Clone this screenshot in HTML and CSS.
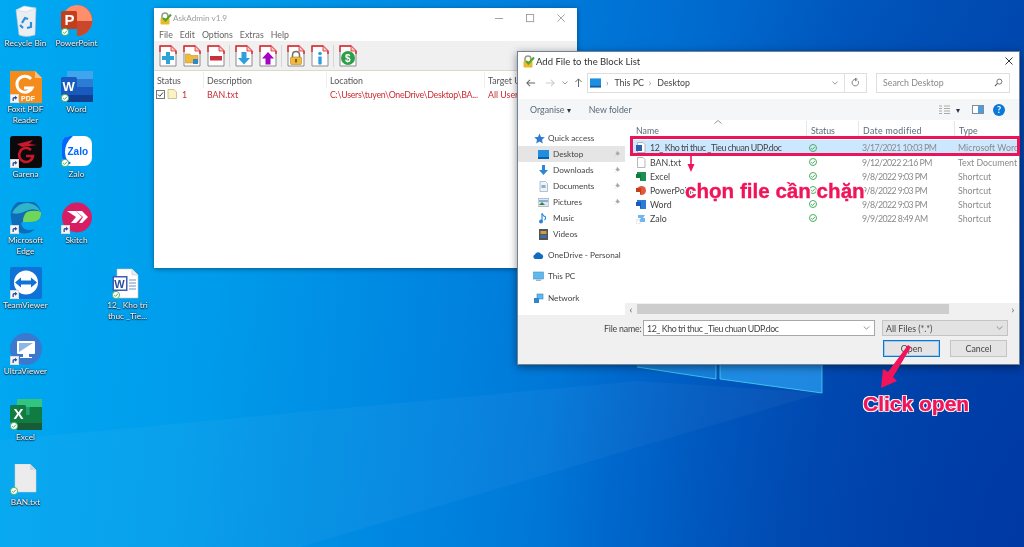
FILE: index.html
```html
<!DOCTYPE html>
<html lang="vi">
<head>
<meta charset="utf-8">
<title>AskAdmin</title>
<link rel="stylesheet" href="styles.css">
</head>
<body>
<svg class="defs" width="0" height="0" aria-hidden="true">
  <defs>
    <symbol id="short" viewBox="0 0 9 9"><rect width="9" height="9" fill="#fff"/><rect x=".5" y=".5" width="8" height="8" fill="#f4f4f4" stroke="#bbb" stroke-width=".5"/><path d="M2.5 7V4.5Q2.5 3 4 3H5V1.8L7.4 3.8 5 5.8V4.5H4Q3.8 4.5 3.8 5V7Z" fill="#2b4f9c"/></symbol>
    <symbol id="sync" viewBox="0 0 8 8"><circle cx="4" cy="4" r="3.6" fill="#fff" stroke="#4aae5c" stroke-width=".9"/><path d="M2.2 4.1 3.5 5.4 5.9 2.8" fill="none" stroke="#4aae5c" stroke-width="1"/></symbol>
    <symbol id="page" viewBox="0 0 18 22"><path d="M1 1H12L17 6V21H1Z" fill="#fff" stroke="#8b8b8b"/><path d="M1 7V1H12L17 6V9" fill="none" stroke="#e0242c" stroke-width="1.4"/><path d="M12 1V6H17" fill="#f7c8c8" stroke="#e0242c" stroke-width=".8"/></symbol>
    <symbol id="lockcheck" viewBox="0 0 13 13"><path d="M3 6V4Q3 1 6 1T9 4V6" fill="none" stroke="#9a9a8a" stroke-width="1.6"/><rect x="1.5" y="6" width="9" height="6.5" rx="1" fill="#e9b92d"/><path d="M4 6 6.5 8.5 12 2.5" fill="none" stroke="#4fa52a" stroke-width="2"/></symbol>
    <symbol id="ok" viewBox="0 0 8 8"><circle cx="4" cy="4" r="3.5" fill="none" stroke="#4aae5c" stroke-width="1"/><path d="M2.2 4.100 3.500 5.400 5.900 2.900" fill="none" stroke="#4aae5c"/></symbol>
    <symbol id="pin" viewBox="0 0 8 8"><path d="M4 .8 7.2 4 5.6 4.4 4.2 5.8 3.8 4.4 1 7 3.6 4.2 2.2 3.8 3.6 2.4Z" fill="#a8a8a8"/></symbol>
    <symbol id="sdoc" viewBox="0 0 10 11"><path d="M1.5 .5H7L9 2.5V10.500H1.500Z" fill="#fff" stroke="#9a9a9a" stroke-width=".7"/></symbol>
  </defs>
</svg>
<main class="screen">
  <svg class="wall" viewBox="0 0 1024 547" aria-hidden="true">
    <polygon points="0,440 637,381 822,393 300,547 0,547" fill="#fff" opacity=".035"/>
    <polygon points="500,300 637,300 637,367 716,379 716,300" fill="#2a9cf0" opacity=".55"/>
    <polygon points="720,300 822,300 822,393 720,379" fill="#2a9cf0" opacity=".75"/>
    <path d="M637 367 716 379V360M720 360V379L822 393V360" fill="none" stroke="#47d7ee" stroke-width="1" opacity=".8"/>
  </svg>

  <section class="desktop">
    <figure class="dicon">
      <svg class="dsvg" viewBox="0 0 32 32"><path d="M6 5 26 3 25 30Q16 33 9 30Z" fill="#e9eef3" stroke="#b8c2cc" stroke-width=".6"/><path d="M6 5 14 1 26 3 16 7Z" fill="#f7f9fb" stroke="#c4ccd4" stroke-width=".5"/><path d="M12 18 15 13 18 14M21 17 21 22 17 23M13 23 10 20" fill="none" stroke="#2d8fd8" stroke-width="2.200"/></svg>
      <figcaption>Recycle Bin</figcaption>
    </figure>
    <figure class="dicon">
      <svg class="dsvg" viewBox="0 0 32 32"><path d="M0 0H25L32 7V32H0Z" fill="#f48c1d"/><path d="M25 0 32 7H25Z" fill="#fbc078"/><path d="M21 8A8 8 0 1 0 22 17H14" fill="none" stroke="#fff" stroke-width="3"/><text x="11" y="30" class="svgb t7" fill="#fff">PDF</text><use href="#short" x="0" y="23" width="9" height="9"/></svg>
      <figcaption>Foxit PDF Reader</figcaption>
    </figure>
    <figure class="dicon">
      <svg class="dsvg" viewBox="0 0 32 32"><rect width="32" height="32" rx="3" fill="#0a0a0c"/><path d="M7 8 23 4 19 8 27 9 12 11" fill="#c9182a"/><path d="M21 14A7 7 0 1 0 23 20H16" fill="none" stroke="#c9182a" stroke-width="2.600"/><use href="#short" x="0" y="23" width="9" height="9"/></svg>
      <figcaption>Garena</figcaption>
    </figure>
    <figure class="dicon">
      <svg class="dsvg" viewBox="0 0 32 32"><path d="M1 16A15 15 0 0 1 31 10Q32 20 20 20H13Q10 20 12 24 15 30 25 27 19 33 11 31 1 27 1 16Z" fill="#0f6cb8"/><path d="M31 10Q32 20 20 20H13Q13 10 20 9 27 8 31 10Z" fill="#6fd65a"/><path d="M2 11Q8 0 18 1 27 2 31 10 24 5 16 9 8 13 2 11Z" fill="#2fb5c9"/><use href="#short" x="0" y="23" width="9" height="9"/></svg>
      <figcaption>Microsoft Edge</figcaption>
    </figure>
    <figure class="dicon">
      <svg class="dsvg" viewBox="0 0 32 32"><rect width="32" height="32" rx="2" fill="#0e72d6"/><circle cx="16" cy="15.500" r="12" fill="#fff"/><path d="M5 15.500 11 10.500V13.500H21V10.500L27 15.500 21 20.500V17.500H11V20.500Z" fill="#0e72d6"/><use href="#short" x="0" y="23" width="9" height="9"/></svg>
      <figcaption>TeamViewer</figcaption>
    </figure>
    <figure class="dicon">
      <svg class="dsvg" viewBox="0 0 32 32"><circle cx="16" cy="16" r="16" fill="#3b78d0"/><rect x="7" y="8" width="18" height="13" rx="1" fill="#fff"/><path d="M9 10H23L9 19Z" fill="#8fb4e6"/><path d="M13 21H19V24H22V25H10V24H13Z" fill="#fff"/><use href="#short" x="0" y="23" width="9" height="9"/></svg>
      <figcaption>UltraViewer</figcaption>
    </figure>
    <figure class="dicon">
      <svg class="dsvg" viewBox="0 0 32 32"><rect x="7" y="0" width="25" height="8" fill="#33c481"/><rect x="7" y="8" width="12.500" height="8" fill="#21a366"/><rect x="19.500" y="8" width="12.500" height="8" fill="#107c41"/><rect x="7" y="16" width="25" height="8" fill="#107c41"/><rect x="7" y="24" width="25" height="7" fill="#185c37"/><rect x="0" y="6" width="16" height="18" rx="1.500" fill="#107c41"/><text x="3.500" y="20" class="svgb t14" fill="#fff">X</text><use href="#sync" x="0" y="23" width="8" height="8"/></svg>
      <figcaption>Excel</figcaption>
    </figure>
    <figure class="dicon">
      <svg class="dsvg" viewBox="0 0 32 32"><path d="M5 0H20L26 6V28H5Z" fill="#ececec" stroke="#d0d0d0" stroke-width=".5"/><path d="M20 0 26 6H20Z" fill="#d6d6d6"/><use href="#sync" x="0" y="23" width="8" height="8"/></svg>
      <figcaption>BAN.txt</figcaption>
    </figure>
    <figure class="dicon">
      <svg class="dsvg" viewBox="0 0 32 32"><path d="M16 0A15.500 15.500 0 1 1 16 31Z" fill="#e0593a"/><path d="M16 0A15.500 15.500 0 0 0 1 16H31A15.500 15.500 0 0 0 16 0Z" fill="#ff8f6b"/><path d="M16 16H31A15.500 15.500 0 0 1 16 31Z" fill="#c9472a"/><rect x="0" y="6" width="16" height="18" rx="1.500" fill="#c43e1c"/><text x="3.500" y="20" class="svgb t14" fill="#fff">P</text><use href="#sync" x="0" y="23" width="8" height="8"/></svg>
      <figcaption>PowerPoint</figcaption>
    </figure>
    <figure class="dicon">
      <svg class="dsvg" viewBox="0 0 32 32"><rect x="6" y="0" width="26" height="8" fill="#41a5ee"/><rect x="6" y="8" width="26" height="8" fill="#2b7cd3"/><rect x="6" y="16" width="26" height="8" fill="#185abd"/><rect x="6" y="24" width="26" height="7" fill="#103f91"/><rect x="0" y="6" width="16" height="18" rx="1.500" fill="#185abd"/><text x="1.500" y="20" class="svgb t13" fill="#fff">W</text><use href="#sync" x="0" y="23" width="8" height="8"/></svg>
      <figcaption>Word</figcaption>
    </figure>
    <figure class="dicon">
      <svg class="dsvg" viewBox="0 0 32 32"><rect x="1" y="0" width="30" height="30" rx="8" fill="#fff"/><path d="M1 8Q1 0 9 0H12Q4 7 4 16 4 24 10 27 6 30 3 27 1 25 1 20Z" fill="#0068ff"/><text x="6.500" y="19" class="svgb t10" fill="#0068ff">Zalo</text><use href="#sync" x="0" y="23" width="8" height="8"/></svg>
      <figcaption>Zalo</figcaption>
    </figure>
    <figure class="dicon">
      <svg class="dsvg" viewBox="0 0 32 32"><circle cx="16" cy="15.500" r="15" fill="#d81e63"/><path d="M6 9H15L21 15 15 21H10L15 15Z" fill="#fff"/><path d="M15 9H21L27 15 21 21H18L22 15Z" fill="#fff"/><use href="#short" x="0" y="23" width="9" height="9"/></svg>
      <figcaption>Skitch</figcaption>
    </figure>
    <figure class="dicon doc-file">
      <svg class="dsvg" viewBox="0 0 32 32"><path d="M5 2H20L26 8V31H5Z" fill="#fff" stroke="#c4c4c4" stroke-width=".6"/><path d="M20 2V8H26" fill="#eee" stroke="#c4c4c4" stroke-width=".6"/><path d="M17 13H24M17 16H24M17 19H24M17 22H24" stroke="#9db6d8" stroke-width="1.300"/><rect x="0.500" y="9" width="15" height="15" fill="#3a5fb4"/><rect x="2" y="10.500" width="12" height="12" fill="#fff"/><text x="2.300" y="20.500" class="svgb t11" fill="#2b4f9c">W</text><use href="#sync" x="0" y="24" width="8" height="8"/></svg>
      <figcaption>12_ Kho tri thuc _Tie...</figcaption>
    </figure>
  </section>

  <section class="askadmin">
    <header class="aa-title">
      <svg class="aa-logo"><use href="#lockcheck" width="13" height="13"/></svg>
      <span>AskAdmin v1.9</span>
      <div class="caption">
        <svg class="cap" viewBox="0 0 10 10"><path d="M0 5H9" stroke="#999"/></svg>
        <svg class="cap" viewBox="0 0 10 10"><rect x=".5" y=".5" width="8" height="8" fill="none" stroke="#999"/></svg>
        <svg class="cap" viewBox="0 0 10 10"><path d="M.5.5 8.500 8.500M8.500.5.500 8.500" stroke="#999"/></svg>
      </div>
    </header>
    <nav class="aa-menu"><span>File</span><span>Edit</span><span>Options</span><span>Extras</span><span>Help</span></nav>
    <div class="aa-tools">
      <div class="tgroup">
        <svg class="tool" viewBox="0 0 18 22"><use href="#page"/><path d="M7 7H11V11H15V15H11V19H7V15H3V11H7Z" fill="#2da3d8"/></svg>
        <svg class="tool" viewBox="0 0 18 22"><use href="#page"/><path d="M2.500 9H7L8 10.500H15V18H2.500Z" fill="#eeb93c" stroke="#b98a1e" stroke-width=".5"/><rect x="10" y="14" width="5" height="5" fill="#2f86c8"/></svg>
        <svg class="tool" viewBox="0 0 18 22"><use href="#page"/><rect x="3" y="11" width="12" height="4.500" fill="#c9303c"/></svg>
      </div>
      <i class="tsep"></i>
      <div class="tgroup">
        <svg class="tool" viewBox="0 0 18 22"><use href="#page"/><path d="M6.500 7H11.500V13H15L9 19.500 3 13H6.500Z" fill="#2f9fdc"/></svg>
        <svg class="tool" viewBox="0 0 18 22"><use href="#page"/><path d="M6.500 19.500H11.500V13.500H15L9 7 3 13.500H6.500Z" fill="#a205c4"/></svg>
      </div>
      <i class="tsep"></i>
      <div class="tgroup">
        <svg class="tool" viewBox="0 0 18 22"><use href="#page"/><path d="M5.500 13V10Q5.500 6.500 9 6.500T12.500 10V13" fill="none" stroke="#6e6e6e" stroke-width="1.500"/><rect x="3.500" y="12" width="11" height="7.500" rx="1" fill="#eeb93c" stroke="#a67c18" stroke-width=".5"/><rect x="8.200" y="14" width="1.600" height="3.500" fill="#6b4d0c"/></svg>
        <svg class="tool" viewBox="0 0 18 22"><use href="#page"/><circle cx="9" cy="8.500" r="1.800" fill="#2f9fdc"/><rect x="7.300" y="11.500" width="3.400" height="8" rx="1" fill="#2f9fdc"/></svg>
      </div>
      <i class="tsep"></i>
      <div class="tgroup">
        <svg class="tool" viewBox="0 0 18 22"><use href="#page"/><circle cx="9" cy="13" r="7" fill="#2f9e4a"/><text x="6" y="16.500" class="svgb t10" fill="#fff">$</text></svg>
      </div>
    </div>
    <div class="aa-head">
      <span class="c-status">Status</span><span class="c-desc">Description</span><span class="c-loc">Location</span><span class="c-target">Target User</span>
    </div>
    <div class="aa-row">
      <span class="c-status status-cell">
        <svg class="chk" viewBox="0 0 9 9"><rect x=".5" y=".5" width="8" height="8" fill="#fff" stroke="#777"/><path d="M2 4.500 3.800 6.300 7 2.500" fill="none" stroke="#444"/></svg>
        <svg class="note" viewBox="0 0 10 10"><path d="M1 .5H7L9.500 3V9.500H1Z" fill="#fbf3c4" stroke="#b8ad78" stroke-width=".7"/></svg>
        <b>1</b>
      </span>
      <span class="c-desc">BAN.txt</span><span class="c-loc">C:\Users\tuyen\OneDrive\Desktop\BA...</span><span class="c-target">All Users</span>
    </div>
  </section>

  <section class="dialog">
    <header class="d-title">
      <svg class="d-logo"><use href="#lockcheck" width="13" height="13"/></svg>
      <span>Add File to the Block List</span>
      <svg class="d-close" viewBox="0 0 8 8"><path d="M.5.5 7.500 7.500M7.500.5.500 7.500" stroke="#333"/></svg>
    </header>
    <div class="d-addr">
      <svg class="nav nav-back" viewBox="0 0 12 10"><path d="M11 5H2M5.500 1.500 2 5 5.500 8.500" fill="none" stroke="#666" stroke-width="1.100"/></svg>
      <svg class="nav nav-fwd" viewBox="0 0 12 10"><path d="M1 5H10M6.500 1.500 10 5 6.500 8.500" fill="none" stroke="#ccc" stroke-width="1.100"/></svg>
      <svg class="nav nav-down" viewBox="0 0 6 4"><path d="M.5.500 3 3 5.500.500" fill="none" stroke="#999"/></svg>
      <svg class="nav nav-up" viewBox="0 0 10 12"><path d="M5 11V2M1.500 5.500 5 2 8.500 5.500" fill="none" stroke="#666" stroke-width="1.100"/></svg>
      <div class="addr-box">
        <svg class="addr-folder" viewBox="0 0 12 10"><rect width="12" height="9" fill="#1e8fe0"/><rect y="8" width="12" height="2" fill="#0a5fa8"/></svg>
        <span class="crumb">›</span><span>This PC</span><span class="crumb">›</span><span>Desktop</span>
        <svg class="addr-chev" viewBox="0 0 8 5"><path d="M.5.500 4 4 7.500.500" fill="none" stroke="#777"/></svg>
        <i class="addr-div"></i>
        <svg class="addr-ref" viewBox="0 0 10 10"><path d="M7.800 3.200A3.600 3.600 0 1 1 5 1.600M5 0V3.200L7 1.600Z" fill="none" stroke="#777"/></svg>
      </div>
      <div class="search-box"><span>Search Desktop</span>
        <svg class="search-ico" viewBox="0 0 10 10"><circle cx="6" cy="4" r="2.800" fill="none" stroke="#666"/><path d="M4 6 1 9" stroke="#666" stroke-width="1.300"/></svg>
      </div>
    </div>
    <div class="d-cmd">
      <span class="org">Organise <em>▾</em></span><span class="newf">New folder</span>
      <div class="cmd-right">
        <svg class="view" viewBox="0 0 11 10"><path d="M0 1H3M0 3.500H3M0 6H3M0 8.500H3M5 1H11M5 3.500H11M5 6H11M5 8.500H11" stroke="#aaa" stroke-width="1.200"/></svg>
        <em class="view-arrow">▾</em>
        <svg class="panes" viewBox="0 0 12 9"><rect x=".5" y=".5" width="11" height="8" fill="#fff" stroke="#7f8b99"/><rect x="6" y="1" width="5" height="7" fill="#4a9ede"/></svg>
        <span class="help">?</span>
      </div>
    </div>
    <div class="d-main">
      <aside class="side">
        <div class="side-item lvl0 qa"><svg class="si" viewBox="0 0 11 11"><path d="M5.500.5 7 4 10.800 4.300 8 6.800 8.800 10.500 5.500 8.500 2.200 10.500 3 6.800.2 4.300 4 4Z" fill="#2b7cd3"/></svg><span>Quick access</span></div>
        <div class="side-item lvl1 sel"><svg class="si" viewBox="0 0 11 11"><rect y="1" width="11" height="8" fill="#1e8fe0"/><rect y="8" width="11" height="2" fill="#0a5fa8"/></svg><span>Desktop</span><svg class="pin"><use href="#pin" width="8" height="8"/></svg></div>
        <div class="side-item lvl1"><svg class="si" viewBox="0 0 11 11"><path d="M4 0H7V5H10L5.500 10 1 5H4Z" fill="#2b88d8"/></svg><span>Downloads</span><svg class="pin"><use href="#pin" width="8" height="8"/></svg></div>
        <div class="side-item lvl1"><svg class="si" viewBox="0 0 11 11"><path d="M2 .5H7.500L9.500 2.500V10.500H2Z" fill="#eef3f8" stroke="#9aa7b5" stroke-width=".7"/><rect x="3.500" y="4" width="4" height="3" fill="#7fb2dc"/></svg><span>Documents</span><svg class="pin"><use href="#pin" width="8" height="8"/></svg></div>
        <div class="side-item lvl1"><svg class="si" viewBox="0 0 11 11"><rect y="1.500" width="11" height="8" fill="#dfe6ee" stroke="#8e9aa8" stroke-width=".6"/><path d="M1 8 4 5 7 8Z" fill="#3f7f4e"/><rect x="1" y="3" width="9" height="2" fill="#7fb2dc"/></svg><span>Pictures</span><svg class="pin"><use href="#pin" width="8" height="8"/></svg></div>
        <div class="side-item lvl1"><svg class="si" viewBox="0 0 11 11"><path d="M4 .5V8" stroke="#2b88d8" stroke-width="1.200"/><circle cx="3" cy="8.500" r="2" fill="#2b88d8"/><path d="M4 .5Q5 3 7.500 4 8 6 6.500 7" fill="none" stroke="#2b88d8" stroke-width="1.200"/></svg><span>Music</span></div>
        <div class="side-item lvl1"><svg class="si" viewBox="0 0 11 11"><rect x="1" y="0" width="9" height="11" fill="#555"/><rect x="2.500" y="2" width="6" height="3" fill="#c8a13a"/><rect x="2.500" y="6" width="6" height="3" fill="#3b6fb5"/></svg><span>Videos</span></div>
        <div class="side-item lvl0 gap5"><svg class="si" viewBox="0 0 11 11"><path d="M2.500 9A2.300 2.300 0 0 1 2 4.500 3.200 3.200 0 0 1 8 4 2.600 2.600 0 0 1 8.500 9Z" fill="#0f6cc0"/></svg><span>OneDrive - Personal</span></div>
        <div class="side-item lvl0 gap5"><svg class="si" viewBox="0 0 11 11"><rect x=".5" y="1" width="10" height="7" fill="#5fb8ee" stroke="#4a8fc0" stroke-width=".6"/><rect x="3" y="8.500" width="5" height="1.500" fill="#a8b4c0"/></svg><span>This PC</span></div>
        <div class="side-item lvl0 gap6"><svg class="si" viewBox="0 0 11 11"><rect x="4" y="1" width="6" height="5" fill="#5fb8ee" stroke="#2f86c8" stroke-width=".6"/><rect x="1" y="5" width="5" height="5" fill="#2f86c8"/></svg><span>Network</span></div>
      </aside>
      <div class="content">
        <div class="list">
          <svg class="sort-caret" viewBox="0 0 8 4"><path d="M.5 3.500 4 .5 7.500 3.500" fill="none" stroke="#999"/></svg>
          <div class="l-head">
            <span class="cn hn">Name</span><span class="cs">Status</span><span class="cd">Date modified</span><span class="ct">Type</span>
          </div>
          <div class="l-row l-sel">
            <span class="cn tight"><svg class="fi" viewBox="0 0 10 11"><use href="#sdoc"/><rect y="3" width="6" height="6" fill="#2b5fb5"/></svg>12_ Kho tri thuc _Tieu chuan UDP.doc</span>
            <span class="cs"><svg class="ok"><use href="#ok" width="8" height="8"/></svg></span><span class="cd">3/17/2021 10:03 PM</span><span class="ct">Microsoft Word</span>
          </div>
          <div class="l-row">
            <span class="cn"><svg class="fi" viewBox="0 0 10 11"><use href="#sdoc"/></svg>BAN.txt</span>
            <span class="cs"><svg class="ok"><use href="#ok" width="8" height="8"/></svg></span><span class="cd">9/12/2022 2:16 PM</span><span class="ct">Text Document</span>
          </div>
          <div class="l-row">
            <span class="cn"><svg class="fi" viewBox="0 0 10 11"><rect x="1" y="1" width="9" height="9" fill="#1d8f55"/><rect y="3" width="5" height="6" fill="#107c41"/><rect y="7" width="4" height="4" fill="#fff"/></svg>Excel</span>
            <span class="cs"><svg class="ok"><use href="#ok" width="8" height="8"/></svg></span><span class="cd">9/8/2022 9:03 PM</span><span class="ct">Shortcut</span>
          </div>
          <div class="l-row">
            <span class="cn"><svg class="fi" viewBox="0 0 10 11"><circle cx="5.500" cy="5.500" r="4.500" fill="#e0593a"/><rect y="3" width="5" height="6" fill="#c43e1c"/><rect y="7" width="4" height="4" fill="#fff"/></svg>PowerPoint</span>
            <span class="cs"><svg class="ok"><use href="#ok" width="8" height="8"/></svg></span><span class="cd">9/8/2022 9:03 PM</span><span class="ct">Shortcut</span>
          </div>
          <div class="l-row">
            <span class="cn"><svg class="fi" viewBox="0 0 10 11"><rect x="1" y="1" width="9" height="9" fill="#2b7cd3"/><rect y="3" width="5" height="6" fill="#185abd"/><rect y="7" width="4" height="4" fill="#fff"/></svg>Word</span>
            <span class="cs"><svg class="ok"><use href="#ok" width="8" height="8"/></svg></span><span class="cd">9/8/2022 9:03 PM</span><span class="ct">Shortcut</span>
          </div>
          <div class="l-row">
            <span class="cn"><svg class="fi" viewBox="0 0 10 11"><path d="M2 2H9L7 5H9V9H2L5 5H2Z" fill="#6fb6ee"/><rect y="7" width="4" height="4" fill="#fff" stroke="#bbb" stroke-width=".4"/></svg>Zalo</span>
            <span class="cs"><svg class="ok"><use href="#ok" width="8" height="8"/></svg></span><span class="cd">9/9/2022 8:49 AM</span><span class="ct">Shortcut</span>
          </div>
        </div>
        <div class="hscroll"><span class="sarrow">‹</span><i class="thumb"></i><span class="sarrow sright">›</span></div>
      </div>
    </div>
    <footer class="d-foot">
      <div class="foot-line">
        <label class="fname">File name:</label>
        <div class="combo combo-file"><span class="tight">12_ Kho tri thuc _Tieu chuan UDP.doc</span><svg class="chev" viewBox="0 0 8 5"><path d="M.5.500 4 4 7.500.500" fill="none" stroke="#777"/></svg></div>
        <div class="combo combo-type"><span>All Files (*.*)</span><svg class="chev" viewBox="0 0 8 5"><path d="M.5.500 4 4 7.500.500" fill="none" stroke="#777"/></svg></div>
      </div>
      <div class="foot-btns">
        <button class="btn btn-def">Open</button>
        <button class="btn">Cancel</button>
      </div>
    </footer>
  </section>

  <div class="redbox"></div>
  <svg class="arrows" viewBox="0 0 1024 547" aria-hidden="true">
    <path d="M691 155V166" stroke="#f0145a" stroke-width="1.600"/>
    <path d="M687.500 164H694.500L691 172Z" fill="#f0145a"/>
    <path d="M881 388 883 369 888 372 908 345 911 347 893 377 897 381Z" fill="#f0145a"/>
  </svg>
  <div class="note-a">chọn file cần chặn</div>
  <div class="note-b">Click open</div>
</main>
</body>
</html>
```
FILE: styles.css
```css
* { box-sizing: border-box; }
html, body { margin: 0; height: 100%; overflow: hidden; }
body { background: #0078d7; }
.defs { position: absolute; }
.screen {
  position: relative; width: 1024px; height: 547px; overflow: hidden;
  font-family: Lato, "Noto Sans", sans-serif; font-size: 8.8px; color: #333;
  filter: blur(.3px);
  background:
    radial-gradient(ellipse 520px 700px at 1060px 560px, #0038a2 0%, rgba(0,56,162,0) 100%),
    linear-gradient(96deg, #00a9f2 0%, #009ceb 22%, #0083df 45%, #006ed2 62%, #0059bf 80%, #0048ae 100%);
}
.wall { position: absolute; inset: 0; width: 1024px; height: 547px; }

/* desktop icons */
.desktop {
  position: absolute; left: 0; top: 5px; display: grid;
  grid-template-columns: repeat(3, 51px); grid-template-rows: repeat(8, 65.6px);
  grid-auto-flow: column;
}
.dicon { margin: 0; display: flex; flex-direction: column; align-items: center; }
.dsvg { width: 32px; height: 32px; display: block; }
.dicon figcaption {
  margin-top: 1px; width: 50px; text-align: center; color: #f4f4f4; font-size: 8.3px; line-height: 11px;
  text-shadow: 0 0 2px #123, 0 1px 1px #123;
}
.doc-file { grid-column: 3; grid-row: 5; }
.svgb { font-family: "Liberation Sans", sans-serif; font-weight: 700; }
.t7 { font-size: 7px; } .t10 { font-size: 10px; } .t11 { font-size: 11px; } .t13 { font-size: 13px; } .t14 { font-size: 15px; }

/* AskAdmin window */
.askadmin {
  position: absolute; left: 154px; top: 8px; width: 423px; height: 260px; background: #fff;
  box-shadow: 0 1px 5px rgba(0,0,0,.4); display: flex; flex-direction: column;
}
.aa-title { height: 20px; display: flex; align-items: center; padding-left: 5px; color: #9c9c9c; font-size: 8.200px; gap: 1px; }
.aa-logo { width: 13px; height: 13px; }
.caption { margin-left: auto; margin-right: 11px; display: flex; gap: 22px; }
.cap { width: 9px; height: 9px; }
.aa-menu { height: 13px; display: flex; align-items: center; padding-left: 5px; gap: 7px; color: #666; font-size: 8.8px; }
.aa-tools {
  height: 30px; background: #f0f0f0; border-bottom: 1px solid #dcd8cc; display: flex; align-items: center; padding-left: 5px;
}
.tgroup { display: flex; gap: 6px; }
.tool { width: 18px; height: 22px; display: block; }
.tsep { width: 1px; height: 22px; background: #d6d6d6; margin: 0 5px 0 4px; }
.aa-head, .aa-row { display: grid; grid-template-columns: 49px 123px 158px 1fr; }
.aa-head { height: 16px; margin-top: 1px; align-items: center; color: #555; }
.aa-head span { height: 100%; display: flex; align-items: center; padding-left: 3px; border-left: 1px solid #eee; }
.aa-head .c-status { border: 0; padding-left: 3px; }
.aa-row { height: 12px; align-items: center; color: #cc2c34; }
.aa-row span { padding-left: 4px; white-space: nowrap; }
.aa-row .c-loc { letter-spacing: -.27px; }
.aa-row .status-cell { display: flex; align-items: center; gap: 2px; padding-left: 2px; }
.status-cell b { font-weight: 400; margin-left: 3px; }
.chk { width: 9px; height: 9px; }
.note { width: 10px; height: 10px; }

/* dialog */
.dialog {
  position: absolute; left: 517px; top: 51px; width: 503px; height: 314px; background: #fff;
  border: 1px solid #6f8398; box-shadow: 0 2px 8px rgba(0,0,0,.45); display: flex; flex-direction: column;
}
.d-title { height: 18px; flex: none; display: flex; align-items: center; padding-left: 4px; gap: 1px; color: #333; font-size: 9.500px; }
.d-logo { width: 13px; height: 13px; }
.d-close { width: 8px; height: 8px; margin-left: auto; margin-right: 6px; }
.d-addr { height: 29px; flex: none; display: flex; align-items: center; position: relative; padding-bottom: 4px; }
.nav { flex: none; }
.nav-back { width: 11px; height: 10px; margin-left: 7px; }
.nav-fwd { width: 11px; height: 10px; margin-left: 9px; }
.nav-down { width: 6px; height: 4px; margin-left: 6px; }
.nav-up { width: 9px; height: 11px; margin-left: 6px; }
.addr-box {
  width: 280px; height: 20px; margin-left: 4px; border: 1px solid #dedede; display: flex; align-items: center; padding-left: 2px; color: #444; font-size: 8.8px;
}
.addr-folder { width: 11px; height: 10px; }
.crumb { margin: 0 6px 0 5px; color: #888; }
.addr-chev { width: 6px; height: 4px; margin-left: auto; }
.addr-div { width: 1px; height: 18px; background: #e2e2e2; margin-left: 6px; }
.addr-ref { width: 9px; height: 9px; margin: 0 6px 0 6px; }
.search-box {
  width: 134px; height: 20px; margin-left: 9px; border: 1px solid #dedede; display: flex; align-items: center; justify-content: space-between; padding: 0 6px; color: #8a8a8a; font-size: 8.8px;
}
.search-ico { width: 9px; height: 9px; }
.d-cmd { height: 21px; flex: none; background: #f5f6f7; display: flex; align-items: center; color: #5a6a7a; position: relative; padding-left: 12px; }
.org em, .view-arrow { font-style: normal; color: #334; font-size: 8px; }
.newf { margin-left: 18px; }
.cmd-right { margin-left: auto; margin-right: 14px; display: flex; align-items: center; }
.view { width: 11px; height: 10px; }
.view-arrow { margin-left: 6px; }
.panes { width: 12px; height: 9px; margin-left: 12px; }
.help { width: 12px; height: 12px; margin-left: 9px; border-radius: 50%; background: #0a78d8; color: #fff; font-weight: 700; font-size: 9px; display: flex; align-items: center; justify-content: center; }
.d-main { height: 195px; flex: none; display: flex; }
.side { width: 107px; flex: none; padding-top: 10px; color: #444; font-size: 8.2px; }
.side-item { height: 16px; display: flex; align-items: center; white-space: nowrap; position: relative; }
.si { width: 11px; height: 11px; flex: none; }
.lvl0 { padding-left: 15px; gap: 4px; }
.lvl1 { padding-left: 20px; gap: 4px; }
.qa { padding-left: 16px; gap: 3px; }
.sel { background: #e5e5e5; }
.gap5 { margin-top: 5px; }
.gap6 { margin-top: 6px; }
.pin { position: absolute; right: 4px; top: 4px; width: 8px; height: 8px; }
.content { flex: 1; min-width: 0; display: flex; flex-direction: column; position: relative; }
.list { flex: 1; position: relative; padding-left: 5px; overflow: hidden; }
.sort-caret { position: absolute; left: 89px; top: 0; width: 8px; height: 4px; }
.l-head, .l-row { display: grid; grid-template-columns: 176px 52px 96px 1fr; }
.l-head { height: 18px; margin-top: 1px; margin-bottom: 1px; align-items: center; color: #5a6a7a; }
.l-head span { height: 100%; display: flex; align-items: center; padding-left: 4px; border-left: 1px solid #e6e6e6; }
.l-head .hn { border: 0; padding-left: 6px; }
.l-head .cd { letter-spacing: .3px; }
.l-row { height: 14px; align-items: center; color: #8a8a8a; white-space: nowrap; }
.l-row span { padding-left: 4px; overflow: hidden; }
.l-row .cd { letter-spacing: -.55px; }
.l-row .cn { display: flex; align-items: center; gap: 4px; padding-left: 6px; color: #444; }
.l-row .cs { padding-left: 3px; display: flex; align-items: center; }
.l-sel { background: #cce8ff; height: 15px; margin-right: 1px; }
.tight { letter-spacing: -.43px; }
.fi { width: 10px; height: 11px; flex: none; }
.ok { width: 8px; height: 8px; }
.hscroll { height: 12px; flex: none; background: #f0f0f0; display: flex; align-items: center; position: relative; color: #555; font-size: 10px; }
.sarrow { width: 12px; text-align: center; line-height: 10px; }
.thumb { width: 312px; height: 10px; background: #cdcdcd; }
.sright { margin-left: auto; }
.d-foot { flex: 1; background: #f0f0f0; padding-top: 5px; }
.foot-line { display: flex; align-items: center; height: 16px; padding-left: 86px; }
.fname { width: 39px; color: #444; white-space: nowrap; letter-spacing: -.2px; }
.combo { height: 16px; display: flex; align-items: center; justify-content: space-between; padding: 0 4px 0 3px; color: #444; }
.combo-file { width: 232px; background: #fff; border: 1px solid #a8a8a8; }
.combo-type { width: 126px; margin-left: 7px; background: #e2e2e2; border: 1px solid #c4c4c4; }
.chev { width: 7px; height: 4px; }
.foot-btns { display: flex; justify-content: flex-end; gap: 10px; padding-right: 12px; margin-top: 4px; }
.btn { width: 57px; height: 17px; padding: 0; font: inherit; color: #444; background: #e4e4e4; border: 1px solid #c4c4c4; }
.btn-def { border: 1px solid #0a78d0; box-shadow: inset 0 0 0 1px #9ccbef; }

/* annotations */
.redbox { position: absolute; left: 630px; top: 136px; width: 390px; height: 20px; border: 3px solid #ea1559; }
.arrows { position: absolute; inset: 0; width: 1024px; height: 547px; pointer-events: none; }
.note-a, .note-b {
  position: absolute; font-family: "Liberation Sans", sans-serif; font-weight: 700; color: #f0145a; white-space: nowrap;
  -webkit-text-stroke: .35px #f0145a;
  text-shadow: 1px 0 0 #fff, -1px 0 0 #fff, 0 1px 0 #fff, 0 -1px 0 #fff, 1px 1px 0 #fff, -1px -1px 0 #fff, 1px -1px 0 #fff, -1px 1px 0 #fff;
}
.note-a { left: 685px; top: 179px; font-size: 20.600px; line-height: 23px; }
.note-b { left: 863px; top: 392px; font-size: 21px; line-height: 24px; }
```
